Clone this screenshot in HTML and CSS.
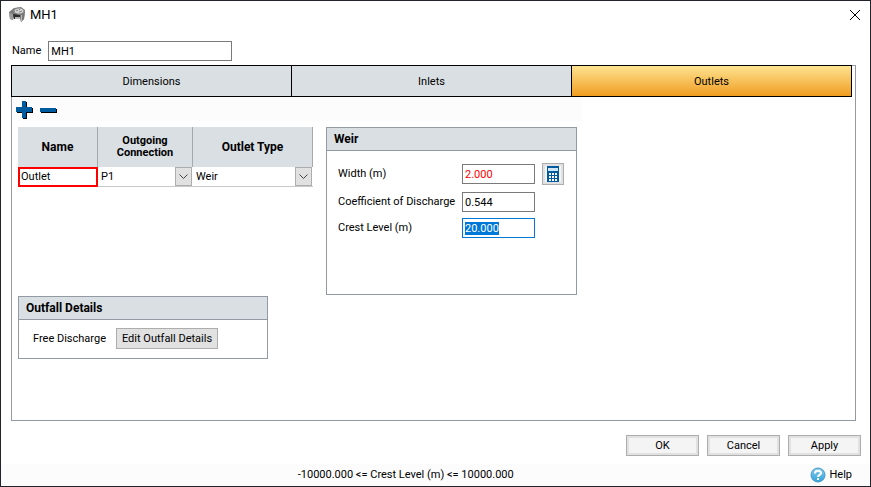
FILE: index.html
```
<!DOCTYPE html>
<html lang="en">
<head>
    <meta charset="UTF-8">
    <meta name="viewport" content="width=device-width, initial-scale=1.0">
    <title>MH1</title>
    <link rel="stylesheet" href="styles.css">
</head>
<body>
    <div class="window">
        <header class="titlebar">
            <svg class="app-icon" width="17" height="16" viewBox="0 0 17 16">
                <path d="M0 5 L5 1 L12 0 L16 3 L15 12 L12 15 L11 11 L5 10 L4 13 L1 12 Z" fill="#7a7a7a"/>
                <path d="M0 6 L4 7 L4 13 L1 12 Z" fill="#9c9c9c"/>
                <path d="M11 8 L16 4 L15 12 L12 15 Z" fill="#777"/>
                <path d="M12 8 L13 8 L13 14 L12 15 Z" fill="#bbb"/>
                <path d="M4 7 L11 8 L11 12 L5 12 Z" fill="#2b2b2b"/>
                <path d="M6 10 L11 10 L11 12 L6 12 Z" fill="#b5b5b5"/>
                <ellipse cx="10" cy="4" rx="5" ry="3" fill="#d2d2d2" stroke="#8a8a8a"/>
                <path d="M7 4 L9 3 M10 5 L13 4 M10 2 L11 3" stroke="#888"/>
            </svg>
            <h1>MH1</h1>
            <button type="button" class="close" aria-label="Close">
                <svg width="12" height="12" viewBox="0 0 12 12"><path d="M1 1 L11 11 M11 1 L1 11" stroke="#000" fill="none"/></svg>
            </button>
        </header>

        <div class="name-row">
            <label for="nodeName">Name</label>
            <input type="text" id="nodeName" value="MH1">
        </div>

        <main class="panel">
            <div class="tabs" role="tablist">
                <button type="button" class="tab" role="tab">Dimensions</button>
                <button type="button" class="tab" role="tab">Inlets</button>
                <button type="button" class="tab active" role="tab" aria-selected="true">Outlets</button>
            </div>

            <div class="toolbar">
                <button type="button" aria-label="Add outlet">
                    <svg width="18" height="18" viewBox="0 0 18 18">
                        <path d="M7 1 H11 V7 H17 V12 H11 V18 H7 V12 H1 V7 H7 Z" fill="#000"/>
                        <path d="M6 0 H10 V6 H16 V11 H10 V17 H6 V11 H0 V6 H6 Z" fill="#005a9e"/>
                    </svg>
                </button>
                <button type="button" aria-label="Remove outlet">
                    <svg width="18" height="18" viewBox="0 0 18 18">
                        <path d="M1 8 H17 V12 H1 Z" fill="#000"/>
                        <path d="M0 7 H16 V11 H0 Z" fill="#005a9e"/>
                    </svg>
                </button>
            </div>

            <div class="content">
                <table class="outlets">
                    <thead>
                        <tr>
                            <th class="col-name">Name</th>
                            <th class="col-connection">Outgoing Connection</th>
                            <th class="col-type">Outlet Type</th>
                        </tr>
                    </thead>
                    <tbody>
                        <tr>
                            <td class="current"><input type="text" value="Outlet" aria-label="Outlet name"></td>
                            <td>
                                <div class="dropdown">
                                    <select aria-label="Outgoing connection"><option>P1</option></select>
                                    <span class="arrow"><svg width="9" height="6" viewBox="0 0 9 6"><path d="M0.5 0.5 L4.5 4.5 L8.5 0.5" stroke="#444" fill="none"/></svg></span>
                                </div>
                            </td>
                            <td>
                                <div class="dropdown">
                                    <select aria-label="Outlet type"><option>Weir</option></select>
                                    <span class="arrow"><svg width="9" height="6" viewBox="0 0 9 6"><path d="M0.5 0.5 L4.5 4.5 L8.5 0.5" stroke="#444" fill="none"/></svg></span>
                                </div>
                            </td>
                        </tr>
                    </tbody>
                </table>

                <section class="group weir">
                    <h2>Weir</h2>
                    <div class="fields">
                        <label for="weirWidth">Width (m)</label>
                        <input type="text" id="weirWidth" class="changed" value="2.000">
                        <button type="button" class="calc" aria-label="Calculate width">
                            <svg width="16" height="16" viewBox="0 0 16 16">
                                <rect width="16" height="16" fill="#f4f4f4"/>
                                <rect x="2" width="12" height="16" fill="#005a9e"/>
                                <rect x="3" y="2" width="10" height="3" fill="#cfe6f7"/>
                                <path d="M4 7h2v2h-2z M7 7h2v2h-2z M10 7h2v2h-2z M4 10h2v2h-2z M7 10h2v2h-2z M10 10h2v2h-2z M4 13h2v2h-2z M7 13h2v2h-2z M10 13h2v2h-2z" fill="#fff"/>
                            </svg>
                        </button>
                        <label for="coefficient">Coefficient of Discharge</label>
                        <input type="text" id="coefficient" value="0.544">
                        <label for="crestLevel">Crest Level (m)</label>
                        <input type="text" id="crestLevel" value="20.000">
                    </div>
                </section>

                <section class="group outfall">
                    <h2>Outfall Details</h2>
                    <div class="outfall-row">
                        <span>Free Discharge</span>
                        <button type="button" class="edit">Edit Outfall Details</button>
                    </div>
                </section>
            </div>
        </main>

        <div class="actions">
            <button type="button">OK</button>
            <button type="button">Cancel</button>
            <button type="button">Apply</button>
        </div>

        <footer class="statusbar">
            <span class="range">-10000.000 &lt;= Crest Level (m) &lt;= 10000.000</span>
            <a href="#" class="help">
                <svg width="16" height="16" viewBox="0 0 16 16">
                    <defs>
                        <linearGradient id="helpFill" x1="0" y1="0" x2="0" y2="1">
                            <stop offset="0" stop-color="#8accee"/>
                            <stop offset="1" stop-color="#2fa2dc"/>
                        </linearGradient>
                    </defs>
                    <circle cx="8" cy="8" r="7" fill="url(#helpFill)" stroke="#4a98c6"/>
                    <path d="M5 6.5 C5 3 11 3 11 6.2 C11 8 8 7.8 8 10" fill="none" stroke="#fff" stroke-width="2"/>
                    <rect x="7" y="11" width="2" height="2" fill="#fff"/>
                </svg>
                Help
            </a>
        </footer>
    </div>

    <script>
        var crest = document.getElementById("crestLevel");
        crest.focus();
        crest.select();
    </script>
</body>
</html>
```

FILE: styles.css
```
* {
    box-sizing: border-box;
}

body {
    margin: 0;
    font-family: Roboto, Arial, sans-serif;
    font-size: 11px;
    line-height: 14px;
    color: #000;
    background-color: #fff;
}

button,
input,
select {
    font: inherit;
    color: inherit;
    margin: 0;
    padding: 0;
    border-radius: 0;
}

svg {
    display: block;
}

.window {
    display: flex;
    flex-direction: column;
    min-height: 100vh;
    border: 1px solid #23242b;
}

.titlebar {
    display: flex;
    align-items: center;
    height: 28px;
    padding: 0 9px 0 8px;
}

.titlebar h1 {
    flex: 1;
    margin: 0 0 0 4px;
    font-size: 13px;
    font-weight: normal;
}

.close {
    border: none;
    background: none;
}

.name-row {
    display: flex;
    align-items: center;
    gap: 7px;
    padding: 12px 11px 4px;
}

.name-row input {
    width: 184px;
}

input[type="text"] {
    height: 20px;
    padding: 0 2px;
    border: 1px solid #7a7a7a;
    background-color: #fff;
    outline: none;
}

input[type="text"]:focus {
    border-color: #0078d7;
}

input::selection {
    color: #fff;
    background-color: #0078d7;
}

.panel {
    flex: 1;
    margin: 0 14px 0 10px;
    border: 1px solid #929ba3;
}

.tabs {
    display: flex;
    margin: -1px 3px 0 -1px;
    border: 1px solid #000;
}

.tab {
    flex: 1;
    height: 30px;
    padding-top: 2px;
    border: none;
    background-color: #dadfe3;
}

.tab + .tab {
    border-left: 1px solid #000;
}

.tab.active {
    background: linear-gradient(#fee391, #f09d21);
}

.toolbar {
    display: flex;
    gap: 6px;
    width: 570px;
    height: 24px;
    padding: 4px;
    background-color: #fcfcfc;
}

.toolbar button {
    height: 18px;
    border: none;
    background: none;
}

.content {
    display: grid;
    grid-template-columns: 295px 251px;
    grid-template-rows: 168px auto;
    column-gap: 13px;
    row-gap: 1px;
    align-items: start;
    padding: 6px;
}

.outlets {
    width: 295px;
    table-layout: fixed;
    border-collapse: separate;
    border-spacing: 0;
}

.outlets th {
    height: 40px;
    padding: 0 8px;
    border-right: 1px solid #a5a9ad;
    background-color: #dadfe3;
    font-size: 12px;
    line-height: 12px;
}

.outlets .col-name {
    width: 80px;
}

.outlets .col-connection {
    width: 95px;
    font-size: 11px;
}

.outlets td {
    height: 20px;
    padding: 0;
    border-bottom: 1px solid #c8c8c8;
}

.outlets td.current {
    border: 2px solid #f00;
}

.outlets td.current input {
    display: block;
    width: 100%;
    height: 16px;
    padding: 0 1px 2px;
    border: none;
}

.dropdown {
    position: relative;
}

.dropdown select {
    display: block;
    width: 100%;
    height: 19px;
    padding: 0 20px 0 3px;
    border: none;
    background-color: #fff;
    appearance: none;
}

.arrow {
    position: absolute;
    top: 0;
    right: 1px;
    display: flex;
    align-items: center;
    justify-content: center;
    width: 17px;
    height: 19px;
    border: 1px solid #adadad;
    background-color: #e1e1e1;
    pointer-events: none;
}

.group {
    border: 1px solid #929ba3;
}

.group h2 {
    margin: 0;
    padding: 4px 7px;
    border-bottom: 1px solid #929ba3;
    background-color: #dadfe3;
    font-size: 12px;
    line-height: 14px;
}

.weir {
    height: 168px;
}

.fields {
    display: grid;
    grid-template-columns: 117px 73px 22px;
    grid-template-rows: 24px 20px 20px;
    column-gap: 7px;
    row-gap: 6px;
    align-items: center;
    padding: 11px 11px 0;
}

.fields label {
    grid-column: 1;
    white-space: nowrap;
}

.fields input {
    width: 73px;
}

.fields .changed {
    color: #f00;
}

.calc {
    display: flex;
    align-items: center;
    justify-content: center;
    width: 22px;
    height: 22px;
    border: 1px solid #adadad;
    background-color: #e1e1e1;
}

.outfall {
    width: 250px;
}

.outfall-row {
    display: flex;
    align-items: center;
    gap: 10px;
    padding: 8px 14px 9px;
}

.edit {
    height: 21px;
    padding: 0 5px;
    border: 1px solid #adadad;
    background-color: #e1e1e1;
}

.actions {
    display: flex;
    justify-content: flex-end;
    gap: 8px;
    padding: 14px 9px 8px;
}

.actions button {
    width: 73px;
    height: 21px;
    border: 1px solid #adadad;
    background-color: #f4f4f4;
    box-shadow: inset 0 0 0 2px #e1e1e1;
}

.statusbar {
    display: flex;
    align-items: center;
    height: 22px;
    padding: 0 18px 0 0;
    background-color: #fcfcfc;
}

.range {
    flex: 1;
    text-align: center;
}

.help {
    display: flex;
    align-items: center;
    gap: 3px;
    color: #000;
    text-decoration: none;
}
```
